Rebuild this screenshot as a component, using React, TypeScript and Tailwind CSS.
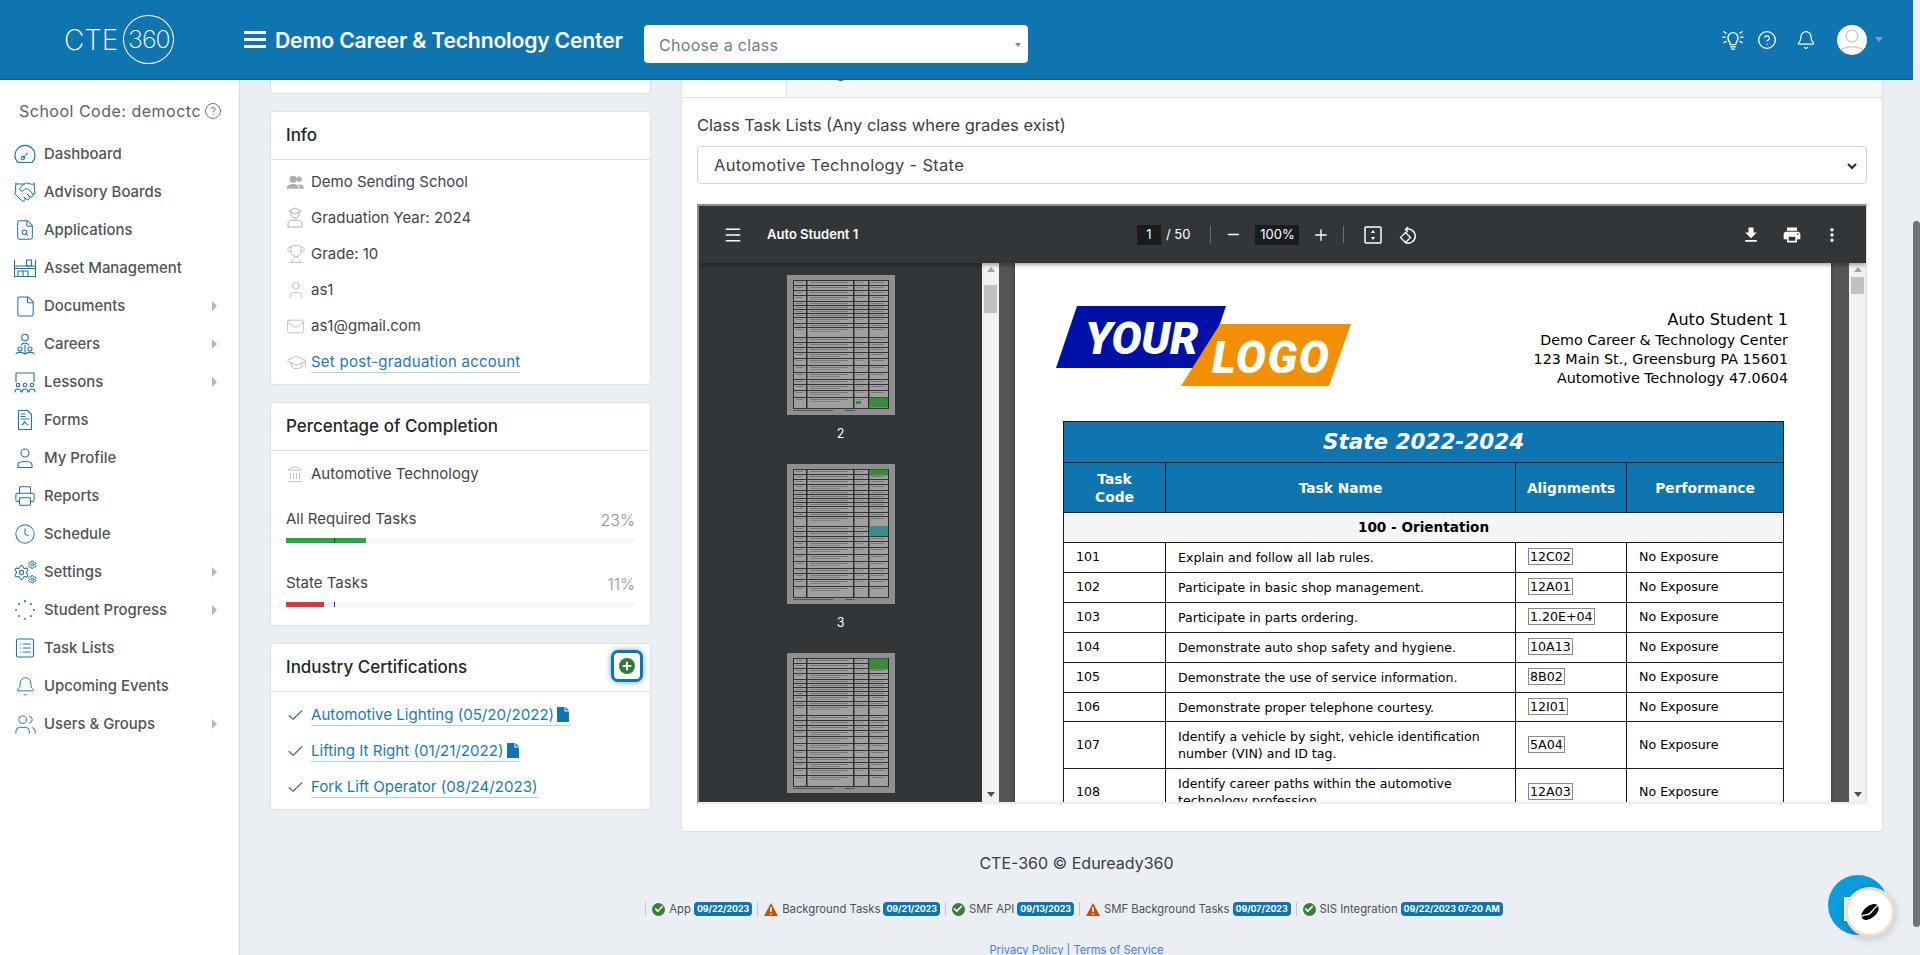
import React from "react";
import { Bell, CircleHelp, Plus, Minus, Menu, EllipsisVertical, Check, FileSearch, File, Clock, Users, User, Mail, Trophy, GraduationCap, Landmark, Handshake, Settings, Printer } from "lucide-react";

const Ic = ({ children, size = 24, className = "" }: { children: React.ReactNode; size?: number; className?: string }) => (
  <svg width={size} height={size} viewBox="0 0 24 24" fill="none" stroke="currentColor" strokeWidth={1.1} strokeLinecap="round" strokeLinejoin="round" className={className}>
    {children}
  </svg>
);

const GaugeIc = () => (
  <Ic>
    <path d="M5 20.5a10 10 0 1 1 14 0z" />
    <path d="M10.5 15.5l4-4.5" />
    <circle cx="10" cy="16" r="1.6" />
  </Ic>
);
const AssetIc = () => (
  <Ic>
    <path d="M1.5 4v17M22.500 4v17M1.500 20.500h21M1.500 10h21M1.500 12.500h21" />
    <rect x="5" y="15" width="10" height="5.500" />
    <path d="M10 15v5.500" />
    <rect x="13.500" y="4" width="5" height="6" />
  </Ic>
);
const CareersIc = () => (
  <Ic>
    <circle cx="12" cy="5.500" r="3.200" />
    <path d="M8.500 13c1-2.600 6-2.600 7 0" />
    <circle cx="7" cy="17" r="2" />
    <circle cx="17" cy="17" r="2" />
    <path d="M3 22c.5-2.200 7.500-2.200 8 0M13 22c.5-2.200 7.500-2.200 8 0M12 13v9" />
  </Ic>
);
const LessonsIc = () => (
  <Ic>
    <path d="M3 12V3h18v9" />
    <circle cx="5" cy="15" r="1.700" />
    <circle cx="12" cy="15" r="1.700" />
    <circle cx="19" cy="15" r="1.700" />
    <path d="M2 22c0-4 6-4 6 0M9 22c0-4 6-4 6 0M16 22c0-4 6-4 6 0" />
  </Ic>
);
const GearsIc = () => (
  <svg width="24" height="24" viewBox="0 0 24 24">
    <Settings x={0} y={4} width={17} height={17} strokeWidth={1.500} />
    <Settings x={14.500} y={0} width={9.500} height={9.500} strokeWidth={2.400} />
    <Settings x={14.500} y={14.500} width={9.500} height={9.500} strokeWidth={2.400} />
  </svg>
);
const DotsIc = () => (
  <Ic>
    <g strokeWidth={1.800}>
      <path d="M12 3v.6M18 6l.1.1M21 12v.1M18 18l.1.1M12 21v.1M6 18l.1.1M3 12v.1M6 6l.1.1" />
    </g>
  </Ic>
);
const ListIc = () => (
  <Ic>
    <rect x="3.500" y="3" width="17" height="18" rx="1.500" />
    <path d="M10 8h7.500M10 12h7.500M10 16h7.500M7 8h.3M7 12h.3M7 16h.3" />
  </Ic>
);
const FormIc = () => (
  <Ic>
    <path d="M5.500 2.500h9l4 4v15h-13z" />
    <path d="M8 6h4M8 8.500h4M8 11h8M9 17c1.500-.5 2-3 2.500-3.500.5 1 1 3 3.500 3" />
  </Ic>
);

const nav: [string, React.ReactNode, boolean][] = [
  ["Dashboard", <GaugeIc />, false],
  ["Advisory Boards", <Handshake size={24} strokeWidth={1} />, false],
  ["Applications", <FileSearch size={22} strokeWidth={1.100} />, false],
  ["Asset Management", <AssetIc />, false],
  ["Documents", <File size={23} strokeWidth={1.100} />, true],
  ["Careers", <CareersIc />, true],
  ["Lessons", <LessonsIc />, true],
  ["Forms", <FormIc />, false],
  ["My Profile", <Ic><circle cx="12" cy="7" r="4" /><path d="M5 21.500v-3c0-4 14-4 14 0v3z" /></Ic>, false],
  ["Reports", <Printer size={22} strokeWidth={1.100} />, false],
  ["Schedule", <Clock size={22} strokeWidth={1.100} />, false],
  ["Settings", <GearsIc />, true],
  ["Student Progress", <DotsIc />, true],
  ["Task Lists", <ListIc />, false],
  ["Upcoming Events", <Bell size={21} strokeWidth={1.100} />, false],
  ["Users & Groups", <Users size={23} strokeWidth={1} />, true],
];

const Sidebar = () => (
  <aside className="w-[240px] shrink-0 bg-white border-r border-[#d5dbe3]">
    <div className="h-[55px] pt-[20px] pl-[19px] flex items-start text-[16px] tracking-[0.5px] leading-[22px] text-[#5d6268] font-normal whitespace-nowrap">
      School Code: democtc
      <CircleHelp size={18} strokeWidth={1.100} className="ml-[3px] mt-[2px] text-[#55595e]" />
    </div>
    {nav.map(([label, icon, arrow]) => (
      <div key={label} className="h-[38px] flex items-center relative">
        <span className="w-[44px] pl-[13px] shrink-0 flex justify-start text-[#1f74ad]">
          <span className="w-[24px] flex justify-center">{icon}</span>
        </span>
        <span className="text-[14.900px] font-medium text-[#50555b]">{label}</span>
        {arrow && <span className="ml-auto mr-[22px] w-0 h-0 border-y-[5px] border-y-transparent border-l-[5px] border-l-[#b4b8bd]" />}
      </div>
    ))}
  </aside>
);

const Header = () => (
  <header className="h-[80px] shrink-0 bg-[#0f75b0] border-b border-[#2c4f9c] flex items-center text-white">
    <div className="w-[240px] shrink-0 pl-[64px] flex items-center">
      <span className="text-[28px] font-extralight leading-none">CTE</span>
      <span className="ml-[5px] w-[51px] h-[49px] rounded-[50%] border border-white flex items-center justify-center text-[25px] font-extralight tracking-[-1px]">360</span>
    </div>
    <svg width="22" height="18" viewBox="0 0 22 18" fill="white" className="ml-[4px]">
      <rect width="22" height="3" y="0" />
      <rect width="22" height="3" y="7" />
      <rect width="22" height="3" y="14" />
    </svg>
    <span className="ml-[9px] text-[21.200px] font-semibold tracking-[-0.2px] whitespace-nowrap pt-[3px]">Demo Career &amp; Technology Center</span>
    <div className="absolute left-[644px] top-[25px] w-[384px] h-[38px] bg-white rounded-[4px] flex items-center pl-[15px] pt-[2px] text-[16px] tracking-[0.3px] text-[#777b80]">
      Choose a class
      <span className="ml-auto mr-[7px] w-0 h-0 border-x-[3.500px] border-x-transparent border-t-[4px] border-t-[#888]" />
    </div>
    <div className="ml-auto flex items-center pr-[30px]">
      <svg width="22" height="22" viewBox="0 0 24 24" fill="none" stroke="currentColor" strokeWidth="1.500" strokeLinecap="round" className="mr-[13px]">
        <path d="M9 17c0-3-2.500-3.500-2.500-7.500a5.500 5.500 0 0 1 11 0C17.500 13.500 15 14 15 17zM9.500 19.500h5M10.500 22h3M1 9h2.500M20.500 9H23M2 3l2.500 1.500M22 3l-2.500 1.500M2 15l2.500-1.500M22 15l-2.500-1.500" />
      </svg>
      <CircleHelp size={20} strokeWidth={1.600} className="mr-[19px]" />
      <Bell size={20} strokeWidth={1.500} className="mr-[21px]" />
      <span className="w-[30px] h-[30px] rounded-full bg-white flex items-center justify-center overflow-hidden">
        <svg width="30" height="30" viewBox="0 0 30 30" fill="none" stroke="#c9ced4" strokeWidth="1.500">
          <circle cx="15" cy="11" r="6" />
          <path d="M3 27c3-7 21-7 24 0" />
        </svg>
      </span>
      <span className="ml-[8px] w-0 h-0 border-x-[4px] border-x-transparent border-t-[5px] border-t-[#8f9ad0]" />
    </div>
  </header>
);

const Card = ({ title, children, action }: { title: string; children: React.ReactNode; action?: React.ReactNode }) => (
  <section className="bg-white border border-[#dde2e8] rounded-[4px] mt-[17px]">
    <div className="h-[48px] px-[15px] border-b border-[#dde2e8] flex items-center justify-between text-[17px] font-medium text-[#24272b] relative">
      {title}
      {action}
    </div>
    {children}
  </section>
);

const InfoRow = ({ icon, children }: { icon: React.ReactNode; children: React.ReactNode }) => (
  <div className="h-[36px] flex items-center">
    <span className="w-[25px] shrink-0 text-[#a7adb3]">{icon}</span>
    {children}
  </div>
);

const Info = () => (
  <Card title="Info">
    <div className="px-[15px] pt-[4px] pb-[4px] text-[15px] text-[#41454a]">
      <InfoRow icon={<svg width="19" height="17" viewBox="0 0 24 20" fill="#a9afb5"><circle cx="9" cy="6" r="4.500" /><circle cx="16.500" cy="6" r="3.500" /><path d="M1 18c0-5 4-6 8-6s7 1 7 6zM17 18c0-3-1-5-2-5.500 4-.5 8 1 8 5.500z" /></svg>}>Demo Sending School</InfoRow>
      <InfoRow icon={<svg width="18" height="22" viewBox="0 0 18 22" fill="none" stroke="#a7adb3" strokeWidth="1"><path d="M9 1l6 3-6 3-6-3zM5 5v3c1 4 7 4 8 0V5" /><path d="M2 20v-3c0-3 3-4 7-4s7 1 7 4v3z" /></svg>}>Graduation Year: 2024</InfoRow>
      <InfoRow icon={<Trophy size={20} strokeWidth={0.900} />}>Grade: 10</InfoRow>
      <InfoRow icon={<User size={20} strokeWidth={0.900} />}>as1</InfoRow>
      <InfoRow icon={<Mail size={19} strokeWidth={0.900} />}>as1@gmail.com</InfoRow>
      <InfoRow icon={<GraduationCap size={21} strokeWidth={0.900} />}>
        <span className="text-[#1a7ab8] border-b border-[#a9d2ea] leading-[20px] tracking-[0.25px]">Set post-graduation account</span>
      </InfoRow>
    </div>
  </Card>
);

const Progress = ({ label, pct, width, color }: { label: string; pct: string; width: string; color: string }) => (
  <div className="h-[38px]">
    <div className="flex justify-between items-center h-[27px] pt-[2px] text-[15px] text-[#41454a]">
      {label}
      <span className="text-[16px] font-light text-[#8f9398]">{pct}</span>
    </div>
    <div className="relative mt-[6px] h-[5px] bg-[#f5f6f8]">
      <div className={`h-full ${color}`} style={{ width }} />
      <span className="absolute left-[48px] top-0 h-[5px] w-[1px] bg-[#333]" />
    </div>
  </div>
);

const Completion = () => (
  <Card title="Percentage of Completion">
    <div className="px-[15px] pt-[5px] pb-[18px]">
      <InfoRow icon={<Landmark size={18} strokeWidth={0.900} />}>
        <span className="text-[15px] text-[#41454a]">Automotive Technology</span>
      </InfoRow>
      <div className="mt-[13px] flex flex-col gap-[26px]">
        <Progress label="All Required Tasks" pct="23%" width="23%" color="bg-[#28a745]" />
        <Progress label="State Tasks" pct="11%" width="11%" color="bg-[#dc3545]" />
      </div>
    </div>
  </Card>
);

const DocIc = () => (
  <svg width="12" height="15" viewBox="0 0 12 15" fill="#0f75b0" className="ml-[3px]">
    <path d="M0 0h7.500v4.500H12V15H0zM8.500 0L12 3.500H8.500z" />
  </svg>
);

const Certs = () => (
  <Card
    title="Industry Certifications"
    action={
      <span className="absolute right-[7px] top-[6px] w-[32px] h-[32px] rounded-[7px] border-[3px] border-[#0f75b0] bg-white flex items-center justify-center shadow-[0_0_6px_rgba(15,117,176,.6)]">
        <span className="w-[16px] h-[16px] rounded-full bg-[#2f7d32] flex items-center justify-center">
          <Plus size={12} strokeWidth={4} color="white" />
        </span>
      </span>
    }
  >
    <div className="px-[15px] pt-[5px] pb-[4px] text-[15.100px] text-[#1a7ab8]">
      {[
        ["Automotive Lighting (05/20/2022)", true],
        ["Lifting It Right (01/21/2022)", true],
        ["Fork Lift Operator (08/24/2023)", false],
      ].map(([t, doc]) => (
        <div key={t as string} className="h-[36px] flex items-center">
          <span className="w-[25px] shrink-0">
            <Check size={19} strokeWidth={1.400} color="#2f7d32" />
          </span>
          <span className="flex items-center border-b border-[#a9d2ea] leading-[21px]">
            {t}
            {doc && <DocIc />}
          </span>
        </div>
      ))}
    </div>
  </Card>
);

const rows: [string, string, string, number][] = [
  ["101", "Explain and follow all lab rules.", "12C02", 30],
  ["102", "Participate in basic shop management.", "12A01", 30],
  ["103", "Participate in parts ordering.", "1.20E+04", 30],
  ["104", "Demonstrate auto shop safety and hygiene.", "10A13", 30],
  ["105", "Demonstrate the use of service information.", "8B02", 30],
  ["106", "Demonstrate proper telephone courtesy.", "12I01", 29],
  ["107", "Identify a vehicle by sight, vehicle identification number (VIN) and ID tag.", "5A04", 47],
  ["108", "Identify career paths within the automotive technology profession.", "12A03", 47],
];

const PdfPage = () => (
  <div className="w-[816px] h-full bg-white overflow-hidden pt-[43px] pl-[41px] pr-[43px] shadow-[0_0_4px_rgba(0,0,0,.4)]" style={{ fontFamily: '"DejaVu Sans", sans-serif' }}>
    <div className="h-[80px] flex justify-between items-start">
      <svg width="296" height="80" viewBox="0 0 296 80" className="block">
        <polygon points="21,0 170,0 149,62 0,62" fill="#0011a8" />
        <polygon points="164,18 295,18 273,80 125,80" fill="#f49000" />
        <text x="29" y="48" fill="white" fontFamily="Roboto" fontWeight="900" fontStyle="italic" fontSize="45" letterSpacing="-0.300">YOUR</text>
        <text x="156" y="67" fill="white" fontFamily="Roboto" fontWeight="900" fontStyle="italic" fontSize="45" letterSpacing="1.500">LOGO</text>
      </svg>
      <div className="text-right text-black pt-[3px] text-[14.300px] leading-[19px] whitespace-nowrap">
        <div className="text-[16px] leading-[22px]">Auto Student 1</div>
        <div>Demo Career &amp; Technology Center</div>
        <div>123 Main St., Greensburg PA 15601</div>
        <div>Automotive Technology 47.0604</div>
      </div>
    </div>
    <table className="mt-[35px] ml-[7px] w-[720px] table-fixed border-collapse text-[12.600px] text-black">
      <colgroup>
        <col className="w-[102px]" />
        <col className="w-[350px]" />
        <col className="w-[111px]" />
        <col className="w-[157px]" />
      </colgroup>
      <tbody>
        <tr className="h-[41px] bg-[#0f75b0]">
          <td colSpan={4} className="border border-[#1a1a1a] text-center text-white text-[21.500px] font-bold italic">State 2022-2024</td>
        </tr>
        <tr className="h-[50px] bg-[#0f75b0] text-white text-[13.800px] font-bold text-center leading-[18px]">
          <td className="border border-[#1a1a1a]">Task<br />Code</td>
          <td className="border border-[#1a1a1a]">Task Name</td>
          <td className="border border-[#1a1a1a]">Alignments</td>
          <td className="border border-[#1a1a1a]">Performance</td>
        </tr>
        <tr className="h-[30px] bg-[#f5f5f5]">
          <td colSpan={4} className="border border-[#1a1a1a] text-center text-[13.600px] font-bold">100 - Orientation</td>
        </tr>
        {rows.map(([code, name, al, h]) => (
          <tr key={code} style={{ height: h }}>
            <td className="border border-[#1a1a1a] pl-[12px]">{code}</td>
            <td className="border border-[#1a1a1a] pl-[12px] pr-[8px] leading-[17px]">{name}</td>
            <td className="border border-[#1a1a1a] pl-[12px]">
              <span className="inline-block border border-[#8a8a8a] px-[1px] leading-[15px]">{al}</span>
            </td>
            <td className="border border-[#1a1a1a] pl-[12px]">No Exposure</td>
          </tr>
        ))}
      </tbody>
    </table>
  </div>
);

const thumbYs = [0, 5, 10, 15, 21, 25, 29, 33, 37, 43, 47, 57, 62, 67, 72, 78, 85, 92, 99, 104, 110, 117, 128];

const Thumb = ({ variant }: { variant: number }) => (
  <svg width="108" height="140" viewBox="0 0 108 140" className="block shrink-0">
    <rect width="108" height="140" fill="#8f8f8f" />
    <g transform="translate(6,5)">
      <rect x="0" y="0" width="96" height="128" fill="#a0a0a0" />
      {thumbYs.slice(0, -1).map((y, i) => (
        <g key={y}>
          <rect x="3" y={y + 2} width="7" height="1" fill="#777" />
          <rect x="17" y={y + 2} width="38" height="1" fill="#757575" />
          {thumbYs[i + 1] - y > 5 && <rect x="17" y={y + 4} width="30" height="1" fill="#808080" />}
          <rect x="63" y={y + 2} width="8" height="1" fill="#858585" />
          <rect x="78" y={y + 2} width="13" height="1" fill="#777" />
        </g>
      ))}
      {thumbYs.map((y) => (
        <rect key={y} x="0" y={y} width="96" height="1" fill="#333" />
      ))}
      <rect x="0" y="0" width="1" height="128" fill="#2b2b2b" />
      <rect x="13" y="0" width="1.500" height="128" fill="#2b2b2b" />
      <rect x="60" y="0" width="1.500" height="128" fill="#2b2b2b" />
      <rect x="75" y="0" width="1.500" height="128" fill="#2b2b2b" />
      <rect x="95" y="0" width="1" height="128" fill="#2b2b2b" />
      <rect x="0" y="130" width="40" height="1" fill="#555" />
      <rect x="52" y="130" width="10" height="1" fill="#555" />
      {variant === 0 && <rect x="76.500" y="117.500" width="18.500" height="10" fill="#3a8a3a" />}
      {variant === 0 && <rect x="63" y="121" width="5" height="3" fill="#3a8a3a" />}
      {variant === 1 && <rect x="76.500" y="0.500" width="18.500" height="6" fill="#3a8a3a" />}
      {variant === 1 && <rect x="76.500" y="57" width="18.500" height="10" fill="#3d8c8c" />}
      {variant === 2 && <rect x="76.500" y="0.500" width="18.500" height="11" fill="#3a8a3a" />}
    </g>
  </svg>
);

const PdfScroll = ({ thumbH, thumbTop }: { thumbH: number; thumbTop: number }) => (
  <div className="w-[17px] shrink-0 bg-[#f1f1f1] flex flex-col items-center pt-[4px] pb-[5px]">
    <span className="w-0 h-0 border-x-[4px] border-x-transparent border-b-[5px] border-b-[#a3a3a3]" />
    <span className="w-[13px] bg-[#c1c1c1]" style={{ height: thumbH, marginTop: thumbTop }} />
    <span className="mt-auto w-0 h-0 border-x-[4px] border-x-transparent border-t-[5px] border-t-[#505050]" />
  </div>
);

const Pdf = () => (
  <div className="mt-[20px] h-[600px] border-t-2 border-l-2 border-b-2 border-[#8d8d8d] border-b-[#eeeeee] border-r border-r-[#dedede] flex flex-col overflow-hidden bg-[#323639] text-white">
    <div className="h-[57px] shrink-0 bg-[#323639] relative z-10 shadow-[0_2px_4px_rgba(0,0,0,.35)] flex items-center">
      <Menu size={20} strokeWidth={1.800} className="ml-[24px]" />
      <span className="ml-[24px] w-[370px] text-[13px] font-semibold">Auto Student 1</span>
      <span className="w-[24px] h-[20px] bg-[#191b1c] flex items-center justify-center text-[13px]">1</span>
      <span className="ml-[5px] text-[13px]">/ 50</span>
      <span className="ml-[20px] w-[1px] h-[17px] bg-[#6b6f72]" />
      <Minus size={17} strokeWidth={1.800} className="ml-[14px]" />
      <span className="ml-[13px] w-[44px] h-[20px] bg-[#191b1c] flex items-center justify-center text-[13px]">100%</span>
      <Plus size={18} strokeWidth={1.800} className="ml-[13px]" />
      <span className="ml-[13px] w-[1px] h-[17px] bg-[#6b6f72]" />
      <svg width="18" height="18" viewBox="0 0 18 18" fill="none" stroke="white" strokeWidth="1.500" className="ml-[20px]">
        <rect x="1" y="1" width="16" height="16" rx="1" />
        <path d="M9 4l2 3H7zM9 14l2-3H7z" fill="white" stroke="none" />
      </svg>
      <svg width="20" height="20" viewBox="0 0 20 20" fill="none" stroke="white" strokeWidth="1.400" className="ml-[16px]">
        <path d="M10 2L7.500 4.500 10 7" />
        <path d="M8 4.500a7 7 0 1 1-1 12.800" />
        <path d="M7.500 7.500l-5 5 5 5 5-5z" />
      </svg>
      <svg width="20" height="20" viewBox="0 0 24 24" fill="white" className="ml-auto">
        <path d="M19 9h-4V3H9v6H5l7 7 7-7zM5 18v2h14v-2H5z" />
      </svg>
      <svg width="20" height="20" viewBox="0 0 24 24" fill="white" className="ml-[21px]">
        <path d="M19 8H5c-1.660 0-3 1.340-3 3v6h4v4h12v-4h4v-6c0-1.660-1.340-3-3-3zm-3 11H8v-5h8v5zm3-7c-.55 0-1-.45-1-1s.45-1 1-1 1 .45 1 1-.45 1-1 1zm-1-9H6v4h12V3z" />
      </svg>
      <EllipsisVertical size={18} strokeWidth={2.400} className="ml-[21px] mr-[25px]" />
    </div>
    <div className="flex-1 min-h-0 flex">
      <div className="w-[283px] shrink-0 flex flex-col items-center pt-[12px] overflow-hidden bg-[#323639]">
        {[0, 1, 2].map((v, i) => (
          <React.Fragment key={v}>
            <Thumb variant={v} />
            <span className="mt-[9px] mb-[20px] h-[20px] text-[12.500px] leading-[20px] shrink-0">{i + 2}</span>
          </React.Fragment>
        ))}
      </div>
      <PdfScroll thumbH={28} thumbTop={13} />
      <div className="flex-1 min-w-0 bg-[#525659] pl-[16px]">
        <PdfPage />
      </div>
      <PdfScroll thumbH={17} thumbTop={5} />
    </div>
  </div>
);

const Stat = ({ ok, label, date }: { ok: boolean; label: string; date: string }) => (
  <span className="flex items-center border-l border-[#c4c8cd] pl-[6px] mr-[5px] h-[14px]">
    {ok ? (
      <span className="w-[13px] h-[13px] rounded-full bg-[#3a7d34] flex items-center justify-center mr-[4px]">
        <Check size={10} strokeWidth={4} color="white" />
      </span>
    ) : (
      <svg width="14" height="13" viewBox="0 0 14 13" className="mr-[4px]">
        <path d="M7 0l7 13H0z" fill="#c8500f" />
        <path d="M6.300 4h1.400v5H6.300zM6.300 10h1.400v1.500H6.300z" fill="white" />
      </svg>
    )}
    <span className="text-[11.300px] text-[#4d5157] whitespace-nowrap">{label}</span>
    <span className="ml-[3px] rounded-[4px] bg-[#0f75b0] text-white text-[8.800px] font-bold px-[3px] h-[14px] leading-[14px] whitespace-nowrap">{date}</span>
  </span>
);

const Footer = () => (
  <footer className="flex flex-col items-center">
    <div className="mt-[21px] h-[20px] leading-[20px] text-[16px] text-[#3a3d42]">CTE-360 © Eduready360</div>
    <div className="mt-[28px] flex items-center h-[16px]">
      <Stat ok label="App" date="09/22/2023" />
      <Stat ok={false} label="Background Tasks" date="09/21/2023" />
      <Stat ok label="SMF API" date="09/13/2023" />
      <Stat ok={false} label="SMF Background Tasks" date="09/07/2023" />
      <Stat ok label="SIS Integration" date="09/22/2023 07:20 AM" />
    </div>
    <div className="mt-[25px] text-[11.200px] leading-[16px] text-[#3f7ee8]">Privacy Policy | Terms of Service</div>
  </footer>
);

const Chat = () => (
  <div className="absolute left-[1828px] top-[875px] w-[60px] h-[60px] rounded-full bg-[#0a9ddd]">
    <div className="absolute left-[16px] top-[22px] w-[20px] h-[24px] bg-white" />
    <div className="absolute left-[17px] top-[12px] w-[50px] h-[50px] rounded-full bg-white border-[3px] border-[#ecdfc9] shadow-[0_2px_10px_rgba(0,0,0,.2)] flex items-center justify-center">
      <svg width="22" height="22" viewBox="0 0 22 22">
        <g transform="rotate(-40 11 11)">
          <ellipse cx="11" cy="11" rx="10" ry="6" fill="#000" />
          <path d="M1 9c5-1 5 4 10 3s5-1 10-1" stroke="white" strokeWidth="1.300" fill="none" />
        </g>
      </svg>
    </div>
  </div>
);

export default function App() {
  return (
    <div className="h-[955px] overflow-hidden flex bg-[#ebeef3] relative" style={{ fontFamily: 'Inter, "Open Sans", sans-serif' }}>
      <div className="flex-1 min-w-0 flex flex-col">
        <Header />
        <div className="flex-1 min-h-0 flex">
          <Sidebar />
          <main className="flex-1 min-w-0 px-[30px] overflow-hidden">
            <div className="flex gap-[30px] items-start">
              <div className="w-[381px] shrink-0">
                <div className="h-[14px] bg-white border border-t-0 border-[#dde2e8] rounded-b-[4px]" />
                <Info />
                <Completion />
                <Certs />
              </div>
              <div className="flex-1 min-w-0 h-[752px] bg-white border border-t-0 border-[#dde2e8] rounded-b-[4px]">
                <div className="h-[18px] flex overflow-hidden border-b border-[#dde2e8]">
                  <div className="w-[104px] bg-white" />
                  <div className="flex-1 bg-[#f5f6f8] border-l border-[#dde2e8] pl-[25px] text-[15px] leading-[22px] text-[#666]">
                    <div className="-mt-[18px]">Progress</div>
                  </div>
                </div>
                <div className="px-[15px] pt-[16px]">
                  <div className="h-[22px] leading-[22px] text-[16.500px] text-[#3a3d42]">Class Task Lists (Any class where grades exist)</div>
                  <div className="mt-[10px] h-[38px] border border-[#ced4da] rounded-[4px] flex items-center pl-[16px] pr-[8px] pt-[1px] text-[16.500px] tracking-[0.3px] text-[#3f4348]">
                    Automotive Technology - State
                    <svg width="12" height="12" viewBox="0 0 12 12" fill="none" stroke="#2b2b2b" strokeWidth="2.200" className="ml-auto">
                      <path d="M2 4l4 4 4-4" />
                    </svg>
                  </div>
                  <Pdf />
                </div>
              </div>
            </div>
            <Footer />
          </main>
        </div>
      </div>
      <div className="w-[7px] shrink-0">
        <div className="mt-[221px] h-[706px] rounded-[4px] bg-[#6f7378]" />
      </div>
      <Chat />
    </div>
  );
}
